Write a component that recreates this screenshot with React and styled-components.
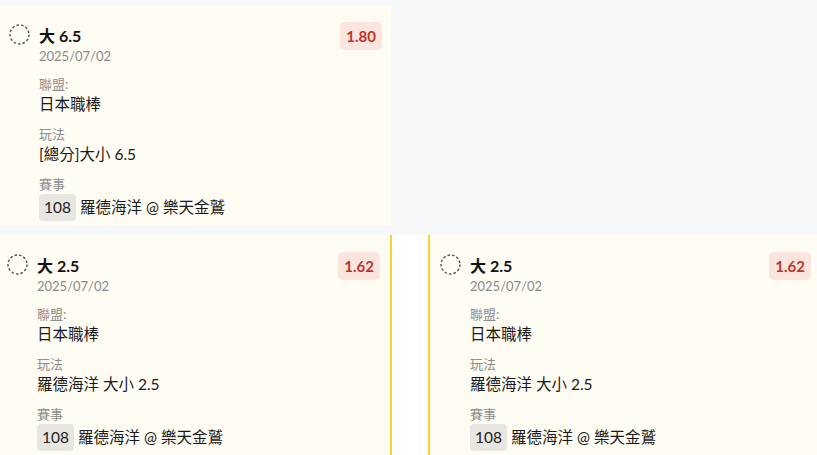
import React from 'react'
import styled, { createGlobalStyle } from 'styled-components'

const GlobalStyle = createGlobalStyle`
  html, body {
    margin: 0;
    padding: 0;
    background: #f7f8fa;
    font-family: Lato, "Noto Sans CJK TC", sans-serif;
    color: #1f1f1f;
  }
`

const Page = styled.div`
  width: 817px;
  height: 455px;
  overflow: hidden;
  padding-top: 5px;
  box-sizing: border-box;
`

const Row = styled.div`
  display: flex;
  gap: 36px;
  margin-top: 10px;
  margin-left: -3px;
  background: #ffffff;
  height: 240px;
`

const Card = styled.div`
  box-sizing: border-box;
  flex: 0 0 auto;
  width: ${p => p.$width}px;
  background: #fffcf3;
  padding: 19px ${p => p.$pad}px 4px;
  border-left: ${p => (p.$border === 'left' ? '2px solid #fbd02f' : 'none')};
  border-right: ${p => (p.$border === 'right' ? '2px solid #fbd02f' : 'none')};
`

const Header = styled.div`
  display: flex;
  align-items: flex-start;
`

const Check = styled.svg`
  flex: 0 0 auto;
  width: 21px;
  height: 21px;
  margin-right: 9px;
`

const TitleBlock = styled.div`
  flex: 1;
  padding-top: 1px;
`

const Title = styled.div`
  font-size: 16px;
  font-weight: 700;
  line-height: 22px;
  color: #111;
`

const DateText = styled.div`
  font-size: 13px;
  line-height: 18px;
  color: #8a8a8a;
`

const Odds = styled.div`
  margin-top: -2px;
  padding: 0 6px;
  height: 28px;
  line-height: 28px;
  border-radius: 5px;
  background: #fbe5de;
  color: #c0352b;
  font-size: 15px;
  font-weight: 700;
`

const Body = styled.div`
  padding-left: 30px;
  margin-top: 10px;
`

const Section = styled.div`
  & + & {
    margin-top: 10px;
  }
`

const Label = styled.div`
  font-size: 13px;
  line-height: 18px;
  color: #8c8c8c;
`

const Value = styled.div`
  display: flex;
  align-items: center;
  gap: 4px;
  font-size: 15.5px;
  line-height: 22px;
  color: #1a1a1a;
`

const Badge = styled.span`
  display: inline-block;
  height: 27px;
  line-height: 27px;
  padding: 0 5px;
  border-radius: 4px;
  background: #e8e6e0;
  color: #222;
  margin-top: 1px;
`

const DashedCircle = () => (
  <Check viewBox="0 0 21 21">
    <circle cx="10.5" cy="10.5" r="9.5" fill="none" stroke="#555" strokeWidth="1.4" strokeDasharray="2.6 2" />
  </Check>
)

const BetCard = ({ title, odds, play, width, pad, border }) => (
  <Card $width={width} $pad={pad} $border={border}>
    <Header>
      <DashedCircle />
      <TitleBlock>
        <Title>{title}</Title>
        <DateText>2025/07/02</DateText>
      </TitleBlock>
      <Odds>{odds}</Odds>
    </Header>
    <Body>
      <Section>
        <Label>聯盟:</Label>
        <Value>日本職棒</Value>
      </Section>
      <Section>
        <Label>玩法</Label>
        <Value>{play}</Value>
      </Section>
      <Section>
        <Label>賽事</Label>
        <Value>
          <Badge>108</Badge>
          羅德海洋 @ 樂天金鷲
        </Value>
      </Section>
    </Body>
  </Card>
)

export default function App () {
  return (
    <>
      <GlobalStyle />
      <Page>
        <BetCard title="大 6.5" odds="1.80" play="[總分]大小 6.5" width={391} pad={9} />
        <Row>
          <BetCard title="大 2.5" odds="1.62" play="羅德海洋 大小 2.5" width={395} pad={10} border="right" />
          <BetCard title="大 2.5" odds="1.62" play="羅德海洋 大小 2.5" width={393} pad={10} border="left" />
        </Row>
      </Page>
    </>
  )
}
